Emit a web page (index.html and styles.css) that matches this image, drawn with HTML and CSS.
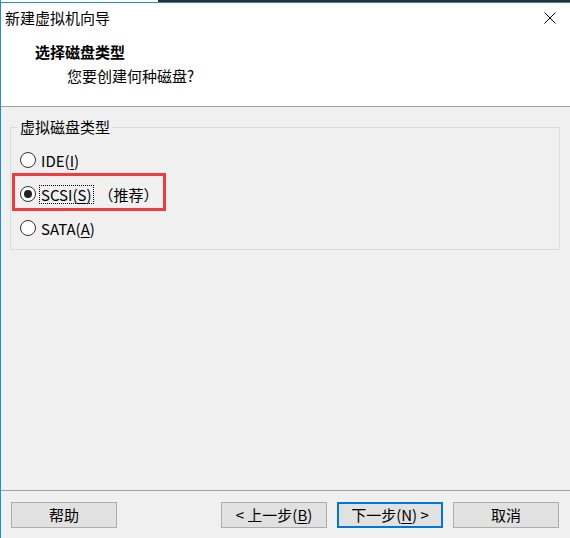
FILE: index.html
```html
<!DOCTYPE html>
<html lang="zh-CN">
<head>
  <meta charset="UTF-8">
  <title>新建虚拟机向导</title>
  <link rel="stylesheet" href="styles.css">
</head>
<body>
  <div class="window">
    <div class="top-strip"><span class="gap"></span><span class="dark"></span></div>
    <div class="titlebar">
      <span class="title">新建虚拟机向导</span>
      <svg class="close" width="12" height="12" viewBox="0 0 12 12">
        <path d="M0.5 0.5 L11.5 11.5 M11.5 0.5 L0.5 11.5" stroke="#000" stroke-width="1" fill="none"/>
      </svg>
    </div>
    <div class="header">
      <div class="head-title">选择磁盘类型</div>
      <div class="head-sub">您要创建何种磁盘?</div>
    </div>
    <div class="content">
      <fieldset class="group">
        <legend>虚拟磁盘类型</legend>
        <div class="options">
          <div class="opt"><span class="radio"></span><span class="label">IDE(<u>I</u>)</span></div>
          <div class="opt picked"><span class="radio on"></span><span class="label focus">SCSI(<u>S</u>)</span><span class="note">（推荐）</span><span class="mark"></span></div>
          <div class="opt"><span class="radio"></span><span class="label">SATA(<u>A</u>)</span></div>
        </div>
      </fieldset>
    </div>
    <div class="footer">
      <button class="btn">帮助</button>
      <span class="spacer"></span>
      <button class="btn">&lt; 上一步(<u>B</u>)</button>
      <button class="btn default">下一步(<u>N</u>) &gt;</button>
      <button class="btn">取消</button>
    </div>
  </div>
</body>
</html>
```

FILE: styles.css
```css
html, body { margin: 0; padding: 0; background: #fff; }
body { font-family: "Noto Sans CJK SC", "Noto Sans", sans-serif; font-size: 15px; color: #000; }
.window { width: 569px; height: 538px; border-left: 1px solid #2b88d8; display: flex; flex-direction: column; background: #f0f0f0; overflow: hidden; }
.top-strip { display: flex; height: 2px; background: #fff; border-bottom: 1px solid #2b88d8; }
.top-strip .gap { width: 157px; }
.top-strip .dark { flex: 1; background: #2e2e2e; }
.titlebar { height: 30px; background: #fff; display: flex; align-items: center; justify-content: space-between; padding: 0 14px 0 4px; }
.title { line-height: 30px; }
.close { display: block; }
.header { background: #fff; padding: 9px 0 20px 0; border-bottom: 1px solid #a0a0a0; }
.head-title { font-weight: bold; line-height: 20px; padding-left: 34px; }
.head-sub { line-height: 20px; margin-top: 4px; padding-left: 66px; }
.content { flex: 1; padding: 10px 10px 0 9px; }
.group { margin: 0; padding: 6px 0 4px 0; border: 1px solid #dcdcdc; min-width: 0; }
.group legend { padding: 0 2px; margin-left: 7px; line-height: 20px; }
.opt { height: 34px; display: flex; align-items: center; padding-left: 9px; }
.picked { position: relative; }
.radio { width: 14px; height: 14px; border: 1px solid #333; border-radius: 50%; background: #fff; display: flex; align-items: center; justify-content: center; margin-right: 3px; }
.radio.on::after { content: ""; width: 8px; height: 8px; border-radius: 50%; background: #222; }
.label { line-height: 17px; padding: 0 1px; border: 1px dotted transparent; }
.label.focus { border-color: #000; }
.note { margin-left: 5px; }
u { text-underline-offset: 2px; }
.mark { position: absolute; left: 1px; top: -4px; width: 154px; height: 38px; box-sizing: border-box; border: 3px solid #ee3b3b; }
.footer { border-top: 1px solid #a0a0a0; padding: 11px 11px 10px 10px; display: flex; }
.spacer { flex: 1; }
.btn { width: 106px; height: 26px; box-sizing: border-box; background: #e1e1e1; border: 1px solid #adadad; font-family: inherit; font-size: 15px; padding: 0; line-height: 22px; color: #000; margin-left: 10px; }
.btn:first-child { margin-left: 0; }
.btn.default { border: 2px solid #0078d7; }
```
